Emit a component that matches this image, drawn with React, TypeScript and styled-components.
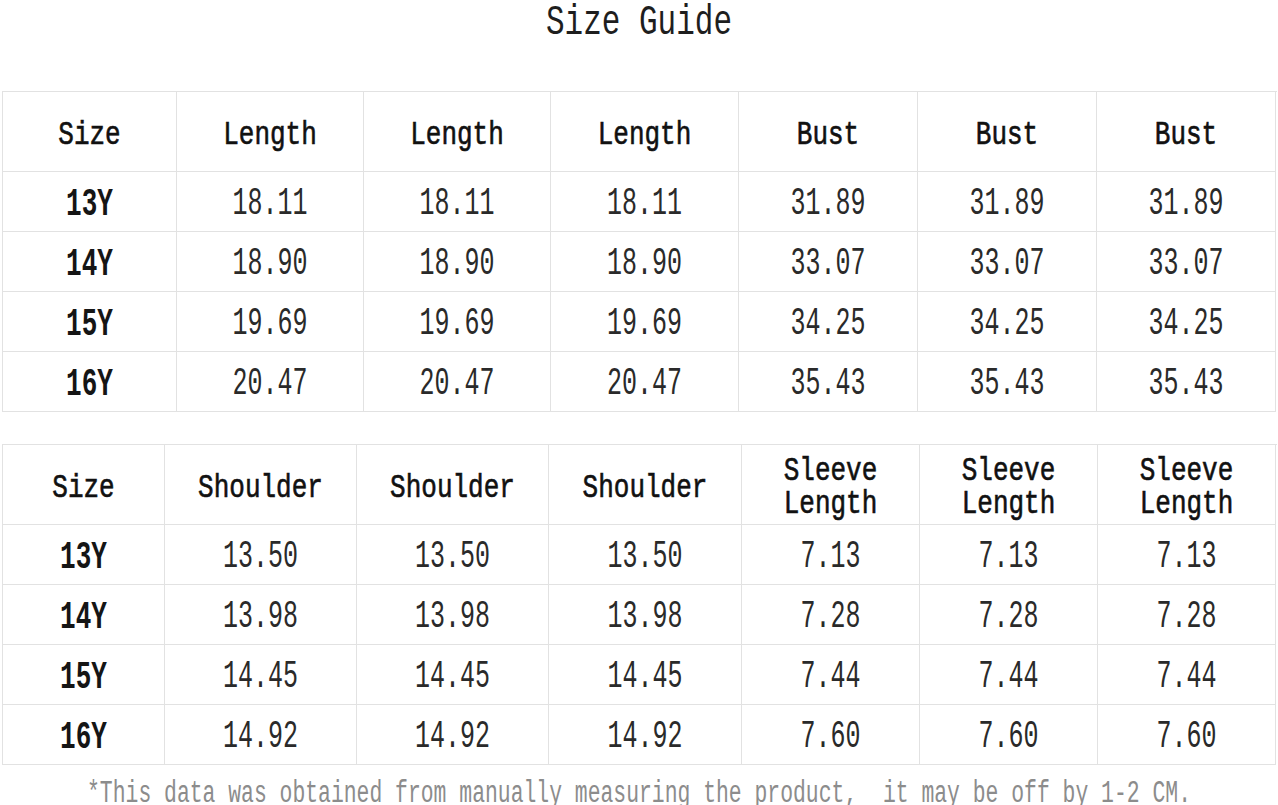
import React from "react";
import styled, { createGlobalStyle } from "styled-components";

const Global = createGlobalStyle`
  html, body { margin: 0; padding: 0; background: #fff; }
  body { font-family: "Liberation Mono", "DejaVu Sans Mono", monospace; color: #222; }
`;

const Page = styled.div`
  width: 1278px;
  height: 805px;
  overflow: hidden;
`;

const TitleBar = styled.div`
  height: 91px;
  display: flex;
  justify-content: center;
  align-items: flex-start;
`;

const Title = styled.h1`
  margin: 0;
  font-size: 31px;
  font-weight: normal;
  line-height: 31px;
  color: #1e1e1e;
  transform: scaleY(1.4);
  transform-origin: center top;
`;

const Grid = styled.div<{ $cols: string; $gapAfter: number }>`
  display: grid;
  grid-template-columns: ${(p) => p.$cols};
  margin-left: 2px;
  width: 1274px;
  border-top: 1px solid #e2e2e2;
  border-left: 1px solid #e2e2e2;
  margin-bottom: ${(p) => p.$gapAfter}px;
`;

const Cell = styled.div<{ $h: number; $shift: number }>`
  box-sizing: border-box;
  height: ${(p) => p.$h}px;
  padding-top: ${(p) => p.$shift}px;
  border-right: 1px solid #e2e2e2;
  border-bottom: 1px solid #e2e2e2;
  display: flex;
  align-items: center;
  justify-content: center;
  text-align: center;
`;

const HeadStack = styled.div`
  display: flex;
  flex-direction: column;
  align-items: center;
  gap: 8px;
`;

const HeadLine = styled.span`
  display: block;
  font-size: 26px;
  line-height: 25px;
  height: 25px;
  font-weight: normal;
  color: #111;
  -webkit-text-stroke: 0.5px #111;
  transform: scaleY(1.3);
`;

const LabelText = styled.span`
  display: inline-block;
  font-size: 26px;
  font-weight: bold;
  color: #151515;
  transform: scaleY(1.5);
`;

const NumText = styled.span`
  display: inline-block;
  font-size: 25px;
  color: #2a2a2a;
  transform: scaleY(1.55);
`;

const Footer = styled.p`
  margin: 0;
  margin-top: 17px;
  height: 22px;
  line-height: 22px;
  text-align: center;
  font-size: 21.4px;
  color: #8c8c8c;
  white-space: pre;
  transform: scaleY(1.45);
`;

type Table = {
  cols: string;
  headH: number;
  heads: string[][];
  rows: [string, string[]][];
  gapAfter: number;
};

const tables: Table[] = [
  {
    cols: "174px 187px 187px 188px 179px 179px 179px",
    headH: 80,
    heads: [["Size"], ["Length"], ["Length"], ["Length"], ["Bust"], ["Bust"], ["Bust"]],
    rows: [
      ["13Y", ["18.11", "18.11", "18.11", "31.89", "31.89", "31.89"]],
      ["14Y", ["18.90", "18.90", "18.90", "33.07", "33.07", "33.07"]],
      ["15Y", ["19.69", "19.69", "19.69", "34.25", "34.25", "34.25"]],
      ["16Y", ["20.47", "20.47", "20.47", "35.43", "35.43", "35.43"]],
    ],
    gapAfter: 32,
  },
  {
    cols: "162px 192px 192px 193px 178px 178px 178px",
    headH: 80,
    heads: [
      ["Size"],
      ["Shoulder"],
      ["Shoulder"],
      ["Shoulder"],
      ["Sleeve", "Length"],
      ["Sleeve", "Length"],
      ["Sleeve", "Length"],
    ],
    rows: [
      ["13Y", ["13.50", "13.50", "13.50", "7.13", "7.13", "7.13"]],
      ["14Y", ["13.98", "13.98", "13.98", "7.28", "7.28", "7.28"]],
      ["15Y", ["14.45", "14.45", "14.45", "7.44", "7.44", "7.44"]],
      ["16Y", ["14.92", "14.92", "14.92", "7.60", "7.60", "7.60"]],
    ],
    gapAfter: 0,
  },
];

export default function App() {
  return (
    <Page>
      <Global />
      <TitleBar>
        <Title>Size Guide</Title>
      </TitleBar>
      {tables.map((t, ti) => (
        <Grid key={ti} $cols={t.cols} $gapAfter={t.gapAfter}>
          {t.heads.map((h, i) => (
            <Cell key={"h" + i} $h={t.headH} $shift={7}>
              <HeadStack>
                {h.map((line, li) => (
                  <HeadLine key={li}>{line}</HeadLine>
                ))}
              </HeadStack>
            </Cell>
          ))}
          {t.rows.map(([label, vals], ri) => (
            <React.Fragment key={"r" + ri}>
              <Cell $h={60} $shift={4}>
                <LabelText>{label}</LabelText>
              </Cell>
              {vals.map((v, vi) => (
                <Cell key={vi} $h={60} $shift={4}>
                  <NumText>{v}</NumText>
                </Cell>
              ))}
            </React.Fragment>
          ))}
        </Grid>
      ))}
      <Footer>{"*This data was obtained from manually measuring the product,  it may be off by 1-2 CM."}</Footer>
    </Page>
  );
}
